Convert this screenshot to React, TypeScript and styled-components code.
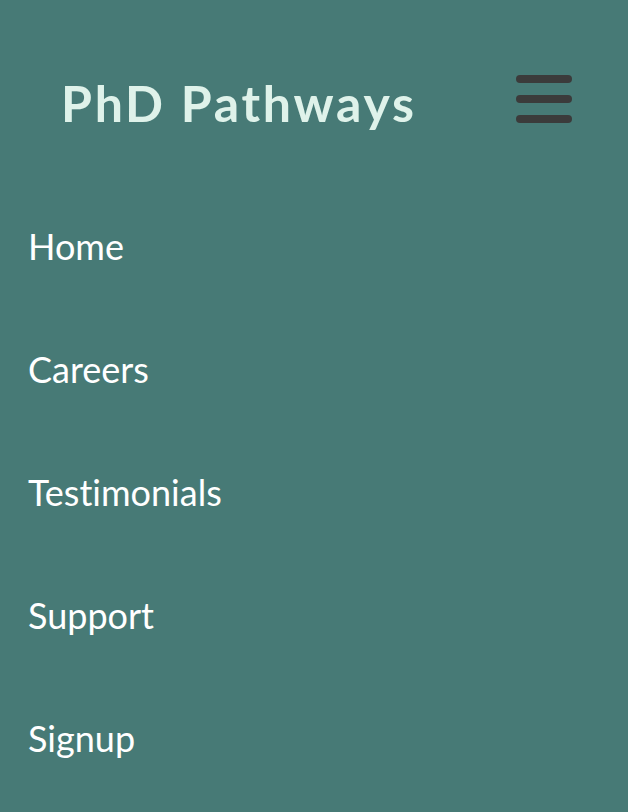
import React from "react";
import styled, { createGlobalStyle } from "styled-components";

const Global = createGlobalStyle`
  html, body { margin: 0; padding: 0; background: #477a76; }
  body { font-family: Lato, "Open Sans", sans-serif; }
`;

const Page = styled.div`
  width: 628px;
  height: 812px;
  background: #477a76;
  box-sizing: border-box;
  display: flex;
  flex-direction: column;
`;

const Header = styled.header`
  display: flex;
  align-items: center;
  justify-content: space-between;
  padding: 75px 56px 0 61px;
  height: 48px;
`;

const Brand = styled.h1`
  margin: 8px 0 0 0;
  font-family: Lato, sans-serif;
  font-weight: 700;
  font-size: 50px;
  letter-spacing: 2.75px;
  color: #dff2ea;
  line-height: 1;
`;

const Burger = styled.button`
  display: flex;
  flex-direction: column;
  gap: 12px;
  padding: 0;
  border: 0;
  background: none;
  cursor: pointer;
`;

const Bar = styled.span`
  display: block;
  width: 56px;
  height: 8px;
  border-radius: 4px;
  background: #3b3b3b;
`;

const Nav = styled.nav`
  display: flex;
  flex-direction: column;
  padding: 0 0 0 28px;
  margin-top: 62px;
`;

const NavLink = styled.a`
  display: block;
  font-family: Lato, sans-serif;
  font-size: 36px;
  font-variant-ligatures: none;
  line-height: 123px;
  height: 123px;
  color: #ffffff;
  text-decoration: none;
`;

const items = ["Home", "Careers", "Testimonials", "Support", "Signup"];

export default function App() {
  return (
    <Page>
      <Global />
      <Header>
        <Brand>PhD Pathways</Brand>
        <Burger aria-label="menu">
          <Bar />
          <Bar />
          <Bar />
        </Burger>
      </Header>
      <Nav>
        {items.map((t) => (
          <NavLink key={t} href="#">{t}</NavLink>
        ))}
      </Nav>
    </Page>
  );
}
